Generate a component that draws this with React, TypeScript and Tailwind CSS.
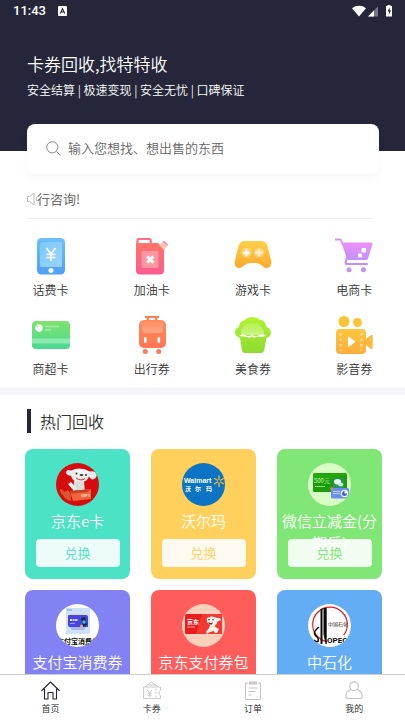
import React, { useState } from 'react';

interface IconProps {
  className?: string;
}

interface Category {
  label: string;
  Icon: React.FC<IconProps>;
}

interface HotCard {
  name: string;
  bg: string;
  text: string;
  Logo: React.FC<IconProps>;
}

/* ---------- status bar ---------- */

const StatusBar: React.FC = () => (
  <div className="flex h-[22px] items-center justify-between pl-[13px] pr-3 text-white">
    <div className="flex items-center gap-3">
      <span className="font-[family-name:Roboto,sans-serif] text-[13px] font-medium leading-[22px]">11:43</span>
      <svg viewBox="0 0 9 10" className="h-[10px] w-[9px]">
        <rect width="9" height="10" rx="1" fill="#fff" />
        <path d="M2.3 7.5 4.5 2.5 6.7 7.5M3.1 6h2.8" stroke="#25263a" strokeWidth="1.1" fill="none" />
      </svg>
    </div>
    <div className="flex items-center">
      <svg viewBox="0 0 41 12" className="h-3 w-[41px]">
        <path d="M0 3.2C4-.1 10-.1 14 3.2L7 11.500Z" fill="#fff" />
        <path d="M26 1.500v10H16Z" fill="#777887" />
        <path d="M22 5.500v6h-6Z" fill="#fff" />
        <path d="M34 1h1.500V0h3v1H40v10.500h-6V1Z" fill="#fff" />
        <path d="M37.700 2.500 35.500 6.500H37v3l2-4h-1.300Z" fill="#25263a" />
      </svg>
    </div>
  </div>
);

/* ---------- category icons ---------- */

const PhoneCardIcon: React.FC<IconProps> = ({ className }) => (
  <svg viewBox="0 0 38 38" className={className}>
    <defs>
      <linearGradient id="phone" x1="0" y1="0" x2="0" y2="1">
        <stop offset="0" stopColor="#6ec0fb" />
        <stop offset="1" stopColor="#4f9ff5" />
      </linearGradient>
      <linearGradient id="phoneScreen" x1="0" y1="0" x2="1" y2="1">
        <stop offset="0" stopColor="#7cc9fd" />
        <stop offset="1" stopColor="#9bd2fd" />
      </linearGradient>
    </defs>
    <rect x="5" y="1" width="28" height="36.500" rx="4.500" fill="url(#phone)" />
    <rect x="8" y="5" width="22" height="25" rx="1.500" fill="url(#phoneScreen)" />
    <path d="m14.500 11 4.500 6 4.500-6M19 17v7M14.500 17.500h9M14.500 20.500h9" stroke="#fff" strokeWidth="1.700" fill="none" />
    <circle cx="19" cy="33.500" r="2.500" fill="#fff" />
  </svg>
);

const FuelIcon: React.FC<IconProps> = ({ className }) => (
  <svg viewBox="0 0 38 38" className={className}>
    <defs>
      <linearGradient id="fuel" x1="0" y1="0" x2="0" y2="1">
        <stop offset="0" stopColor="#ff7468" />
        <stop offset="1" stopColor="#fd5b93" />
      </linearGradient>
    </defs>
    <path d="M4.500 7V2.500Q4.500 2 5.500 2h11q1 0 1.200 1V7" stroke="#fc6d8d" strokeWidth="2.200" fill="none" />
    <path d="M3 6h22l6 6v21.500q0 4-4 4H7q-4 0-4-4Z" fill="url(#fuel)" />
    <path d="m26 8 4-3 4 4-3 4Z" fill="#fdc5ae" />
    <path d="m29.500 4.500 1.500-1 4 4-1.200 1.500Z" fill="#fb8aa5" />
    <rect x="8.500" y="14" width="17" height="17" rx="1.500" fill="#ff96a1" />
    <path d="m14.200 19.500 6.200 6.200M20.400 19.500l-6.200 6.200" stroke="#fff" strokeWidth="3" />
  </svg>
);

const GameIcon: React.FC<IconProps> = ({ className }) => (
  <svg viewBox="0 0 38 38" className={className}>
    <defs>
      <linearGradient id="game" x1="0" y1="0" x2="0" y2="1">
        <stop offset="0" stopColor="#fed04a" />
        <stop offset="1" stopColor="#fea92c" />
      </linearGradient>
      <radialGradient id="glow">
        <stop offset="0" stopColor="#fff" stopOpacity=".8" />
        <stop offset="1" stopColor="#fff" stopOpacity="0" />
      </radialGradient>
    </defs>
    <path
      d="M11 4h16q5 0 6.500 5l3.500 14q1.500 7-4 8-2.500.500-5-2.500Q25 26 22 26h-6q-3 0-6 2.500Q7 31.500 4.500 31-.500 30 1 23L4.500 9Q6 4 11 4Z"
      fill="url(#game)"
    />
    <circle cx="12.500" cy="15.700" r="6" fill="url(#glow)" />
    <circle cx="25" cy="15.700" r="6" fill="url(#glow)" />
    <path d="M12.500 12.500v6.400M9.300 15.700h6.400" stroke="#fff" strokeWidth="1.700" />
    <g fill="#fff" opacity=".85">
      <circle cx="25" cy="12.800" r="1.100" />
      <circle cx="25" cy="18.600" r="1.100" />
      <circle cx="22.100" cy="15.700" r="1.100" />
      <circle cx="27.900" cy="15.700" r="1.100" />
    </g>
  </svg>
);

const CartIcon: React.FC<IconProps> = ({ className }) => (
  <svg viewBox="0 0 38 38" className={className}>
    <defs>
      <linearGradient id="cart" x1="0" y1="0" x2="0" y2="1">
        <stop offset="0" stopColor="#ee8ff8" />
        <stop offset="1" stopColor="#c193fb" />
      </linearGradient>
    </defs>
    <path d="M0 2.500h5q1 0 1.300 1L8 8" stroke="#e58cf6" strokeWidth="2" fill="none" />
    <path d="M6.500 5.500H36q2 0 1.400 2l-4.400 14q-.400 1.500-2 1.500H13L8.500 12Z" fill="url(#cart)" />
    <path d="m11 14 1.500 6q-3.500 7-.500 7H32" stroke="#c78cf9" strokeWidth="2.200" fill="none" strokeLinecap="round" />
    <rect x="26.500" y="11" width="4.500" height="4.500" rx="1" fill="#fff" />
    <rect x="23" y="16.500" width="4" height="4" rx="1" fill="#fff" />
    <circle cx="14" cy="32.700" r="2.500" fill="#c494f8" />
    <circle cx="28.500" cy="32.700" r="2.500" fill="#c494f8" />
  </svg>
);

const MarketIcon: React.FC<IconProps> = ({ className }) => (
  <svg viewBox="0 0 38 38" className={className}>
    <defs>
      <linearGradient id="market" x1="0" y1="0" x2="0" y2="1">
        <stop offset="0" stopColor="#80e26f" />
        <stop offset="1" stopColor="#47d992" />
      </linearGradient>
    </defs>
    <rect y="5" width="38" height="28" rx="4" fill="url(#market)" />
    <rect y="22.500" width="38" height="5" fill="#8ceab0" />
    <circle cx="7" cy="12" r="3.700" fill="#fff" />
    <circle cx="5.500" cy="10.500" r="1.200" fill="#b8f0b4" />
    <path d="M13 10.500h14M13 14h6" stroke="#a6edab" strokeWidth="1.600" />
  </svg>
);

const LuggageIcon: React.FC<IconProps> = ({ className }) => (
  <svg viewBox="0 0 38 38" className={className}>
    <defs>
      <linearGradient id="luggage" x1="0" y1="0" x2="0" y2="1">
        <stop offset="0" stopColor="#ff8c5c" />
        <stop offset="1" stopColor="#ff7553" />
      </linearGradient>
      <linearGradient id="luggagePanel" x1="0" y1="0" x2="0" y2="1">
        <stop offset="0" stopColor="#ff9266" />
        <stop offset="1" stopColor="#ffa585" />
      </linearGradient>
    </defs>
    <path d="M12 1h14M14 1l1.500 3.500M24 1l-1.500 3.500" stroke="#f98057" strokeWidth="2" />
    <rect x="6" y="4" width="27" height="28" rx="5" fill="url(#luggage)" />
    <rect x="9" y="6" width="21" height="11" rx="3.500" fill="url(#luggagePanel)" />
    <rect x="11" y="21" width="2.600" height="6" rx="1.300" fill="#fff" />
    <rect x="24.500" y="21" width="2.600" height="6" rx="1.300" fill="#fff" />
    <circle cx="12.300" cy="35.500" r="2.500" fill="#ff7a59" />
    <circle cx="25.700" cy="35.500" r="2.500" fill="#ff7a59" />
  </svg>
);

const FoodIcon: React.FC<IconProps> = ({ className }) => (
  <svg viewBox="0 0 38 38" className={className}>
    <defs>
      <linearGradient id="cake" x1="0" y1="0" x2="0" y2="1">
        <stop offset="0" stopColor="#b4f233" />
        <stop offset="1" stopColor="#8cdc2f" />
      </linearGradient>
      <linearGradient id="cakeTop" x1="0" y1="0" x2="0" y2="1">
        <stop offset="0" stopColor="#b8f24a" />
        <stop offset="1" stopColor="#c8f488" />
      </linearGradient>
    </defs>
    <path
      d="M6 22Q0 19.500 1 15.500 1.500 12 5 11q0-5 5.500-7Q15 0 21 1.500q3 0 4.500 2 5-.500 7 7.500 4.500 1.500 4.500 5.500-.500 4.500-4.500 5.500L30 35q-.700 2-3 2H11q-2.500 0-3-2Z"
      fill="url(#cake)"
    />
    <path d="M7 19q-1-11 10-12 12 0 13.500 12Z" fill="url(#cakeTop)" />
    <path d="M5 20q4-2.500 7-.500 3 1.500 6-1 3 2.500 6 1 4-2 8 .500l-5 1q-3-1-5 0-2 1-4-.500-3 1.500-5 .500-3-.500-8-1Z" fill="#fff" />
  </svg>
);

const MovieIcon: React.FC<IconProps> = ({ className }) => (
  <svg viewBox="0 0 38 38" className={className}>
    <defs>
      <linearGradient id="movie" x1="0" y1="0" x2="0" y2="1">
        <stop offset="0" stopColor="#fec63d" />
        <stop offset="1" stopColor="#ffae3c" />
      </linearGradient>
    </defs>
    <circle cx="9" cy="5.500" r="5.500" fill="#fec437" />
    <circle cx="22.500" cy="6.500" r="4.500" fill="#fec437" />
    <rect x="1" y="13" width="30" height="25" rx="4" fill="url(#movie)" />
    <path d="m31 23 5-4q1.700-.500 1.700 1v12q0 1.500-1.700 1l-5-4Z" fill="#ffb83e" />
    <path d="M5.500 17v18M26.500 17v18" stroke="#ffdf9e" strokeWidth="2" strokeDasharray="2.500 3" />
    <path d="M13.500 21v9.500l6.500-4.800Z" fill="#fff" stroke="#fff" strokeLinejoin="round" />
  </svg>
);

/* ---------- card logos ---------- */

const JoyLogo: React.FC<IconProps> = ({ className }) => (
  <svg viewBox="0 0 43 43" className={className}>
    <rect width="43" height="43" fill="#d70a0d" />
    <path d="M18 18h10l1 11H17Z" fill="#dcdcdc" />
    <path d="m12 21 3-2 5 6-2 3Z" fill="#f1f1f1" />
    <path d="M15 7.500Q24 3 34 8.500q5-1 7 3-1 5-5 5-2-1-3-3-2 6-10 5.500-7-.500-8-6.500-2 1-5-2 0-5 5-3Z" fill="#ebebeb" />
    <path d="M17 8q9-4 16 1l-8 2Z" fill="#fafafa" />
    <circle cx="20.500" cy="10.500" r=".9" fill="#222" />
    <circle cx="30" cy="12" r=".9" fill="#222" />
    <ellipse cx="25.500" cy="12" rx="1.800" ry="1.100" fill="#333" />
    <path d="M20 15q5 3.500 9 .500" stroke="#b33" strokeWidth="1" fill="none" />
    <path d="m14 28 21-2v10l-18 2Z" fill="#f2643a" />
    <path d="m14 28 21-2-3 3-16 1.500Z" fill="#c9402a" />
    <path d="M4 26q3 0 4 3l4-2 3 5v6q-6-1-8-6-3-1-3-6Z" fill="#d9562f" />
    <text x="25" y="34" fontSize="4" fontWeight="700" fill="#ffe0d0" fontFamily="Liberation Sans, sans-serif">GIFT</text>
  </svg>
);

const WalmartLogo: React.FC<IconProps> = ({ className }) => (
  <svg viewBox="0 0 43 43" className={className}>
    <rect width="43" height="43" fill="#0b74c4" />
    <text x="2" y="20" fontSize="7" fontWeight="700" fill="#fff" fontFamily="Liberation Sans, sans-serif">Walmart</text>
    <g fontSize="6" fontWeight="700" fill="#fff" fontFamily="Noto Sans CJK SC, sans-serif">
      <text x="3" y="28">沃</text>
      <text x="13" y="28">尔</text>
      <text x="24" y="28">玛</text>
    </g>
    <path
      d="M37 13v3.500M37 20v3.500M32.500 15.500l3 1.700M38.500 19l3 1.800M41.500 15.500l-3 1.700M35.500 19l-3 1.800"
      stroke="#fdbb30"
      strokeWidth="1.300"
      strokeLinecap="round"
    />
  </svg>
);

const WechatLogo: React.FC<IconProps> = ({ className }) => (
  <svg viewBox="0 0 43 43" className={className}>
    <rect width="43" height="43" fill="#d9fcc5" />
    <rect x="5" y="10" width="34" height="19" rx="1.500" fill="#22a80c" />
    <path d="M5 20 39 12v15q0 2-2 2H7q-2 0-2-2Z" fill="#189506" opacity=".6" />
    <text x="6" y="20" fontSize="6" fill="#d8ffc2" fontFamily="Noto Sans CJK SC, sans-serif">500元</text>
    <path d="M7 23.500h10" stroke="#c5f5ad" strokeWidth="1.200" strokeDasharray="1.500 .6" />
    <rect x="25" y="15" width="11" height="10" rx="1" fill="#2f8f60" />
    <ellipse cx="29.500" cy="18.800" rx="3.500" ry="2.800" fill="#eafff0" />
    <ellipse cx="32.700" cy="21.500" rx="2.600" ry="2.100" fill="#c9f3d6" />
    <rect x="23" y="25" width="18" height="10.500" rx="1.500" fill="#6b8ef2" />
    <path d="M25 28.500h7M25 30.500h7" stroke="#c3d2ff" strokeWidth="1.200" />
    <circle cx="36.500" cy="30.500" r="3.700" fill="#f3f7ff" />
    <path d="M36.500 28v2.500H39a2.500 2.500 0 1 1-2.500-2.500Z" fill="#3a62d8" />
    <circle cx="23.500" cy="25.500" r="1.300" fill="#ff7b5a" />
  </svg>
);

const AlipayLogo: React.FC<IconProps> = ({ className }) => (
  <svg viewBox="0 0 43 43" className={className}>
    <rect width="43" height="43" fill="#fff" />
    <rect x="10" y="4" width="24" height="26" fill="#cfe0fa" />
    <path d="M11 6h5" stroke="#5aa9b8" strokeWidth="1" />
    <path d="M12 12q0-1 1-1h17q2 0 2 2v10H14q-2 0-2-2Z" fill="#4746dc" />
    <path d="M14 23h16l-2 3H16Z" fill="#a8b8f3" />
    <path d="M14 16h8" stroke="#dfe0ff" strokeWidth="2.200" strokeDasharray="2 .6" />
    <path d="M14 19.500h5" stroke="#9d9cf5" strokeWidth="1" />
    <path d="m25 14 4-1 2 8-4 2Z" fill="#182a5a" />
    <circle cx="28" cy="18" r="1.700" fill="#43c2e0" />
    <circle cx="25.500" cy="22" r="1.500" fill="#f0b057" />
    <text x="1" y="40" fontSize="7" fontWeight="700" fill="#111" fontFamily="Noto Sans CJK SC, sans-serif">支付宝消费券</text>
  </svg>
);

const JdPayLogo: React.FC<IconProps> = ({ className }) => (
  <svg viewBox="0 0 43 43" className={className}>
    <rect width="43" height="43" fill="#fdd0bb" />
    <rect x="3" y="10" width="37" height="20" rx="1.500" fill="#e91d1f" />
    <path d="M20 10h20v20H14Z" fill="#f23a33" />
    <text x="5" y="20" fontSize="6" fontWeight="700" fill="#fff" fontFamily="Noto Sans CJK SC, sans-serif">京东</text>
    <path d="M5 23h8" stroke="#ff9a8e" strokeWidth="1" />
    <path d="M25 14q5-3 10 0 3-1 4 2l-4 2q0 3-3 4l5 3-2 4h-2l-1-2-4 1-3 2-1-2 3-4 1-3q-4-2-3-7Z" fill="#fff3ee" />
    <path d="M26 18q3 2 5 0l-1 2.500h-3Z" fill="#8c2a22" />
    <circle cx="27" cy="15.700" r=".8" fill="#333" />
    <circle cx="31" cy="15.700" r=".8" fill="#333" />
  </svg>
);

const SinopecLogo: React.FC<IconProps> = ({ className }) => (
  <svg viewBox="0 0 43 43" className={className}>
    <rect width="43" height="43" fill="#fff" />
    <circle cx="22" cy="20.500" r="17.300" fill="none" stroke="#ea1c24" strokeWidth="1.200" />
    <path d="M12.500 5.500 14.500 4v36h-2ZM15.500 4h3.200v36h-1.200L15.500 30Z" fill="#0a0a0a" />
    <path d="M11 23q-5 4-4.500 6.500.500 2 3 4 1.500 1.500.500 4-2 1-4-1.500" stroke="#0a0a0a" strokeWidth="1.600" fill="none" />
    <rect x="19" y="31" width="24" height="12" fill="#fff" />
    <text x="20" y="22" fontSize="5" fill="#111" fontFamily="Noto Sans CJK SC, sans-serif">中国石化</text>
    <text x="19" y="39" fontSize="8" fontWeight="700" fill="#0a0a0a" fontFamily="Roboto, sans-serif">OPEC</text>
  </svg>
);

/* ---------- tab icons ---------- */

const HomeIcon: React.FC<IconProps> = ({ className }) => (
  <svg viewBox="0 0 20 20" className={className} fill="none" stroke="#25263a" strokeWidth="1.100" strokeLinejoin="round" strokeLinecap="round">
    <path d="M.800 9.500 9.500 1l8.700 8.500M3.500 8v10H7v-6.500h5V18h3.500V8" />
  </svg>
);

const VoucherIcon: React.FC<IconProps> = ({ className }) => (
  <svg viewBox="0 0 20 20" className={className} fill="none" stroke="#c4c4c4" strokeWidth=".9">
    <path d="M1.500 6h17v3.500q-1.500.500-1.500 2.500t1.500 2.500v3h-17ZM3 6l5-4q1.500-1.200 3 0l5 4M6 4h8" />
    <path d="m5.500 9 2.200 3 2.200-3M7.700 12v4M5.700 12.300h4M5.700 14.200h4" />
    <path d="M14 7.500v9.500" strokeDasharray="2 1.500" />
  </svg>
);

const OrderIcon: React.FC<IconProps> = ({ className }) => (
  <svg viewBox="0 0 20 20" className={className} fill="none" stroke="#c4c4c4" strokeWidth="1">
    <path d="M5.500 2H2.500v16.500h15V2H14.500" />
    <rect x="6.500" y="1" width="7" height="2" fill="#d4d4d4" />
    <path d="M5.500 7h9M5.500 10.500h7M5.500 14h3" />
  </svg>
);

const UserIcon: React.FC<IconProps> = ({ className }) => (
  <svg viewBox="0 0 20 20" className={className} fill="none" stroke="#c4c4c4" strokeWidth="1.100">
    <circle cx="10" cy="5.200" r="4.300" />
    <path d="M7 8.500Q2 10 1.800 15.500q0 2 2 2h12.400q2 0 2-2Q18 10 13 8.500" />
  </svg>
);

const CATEGORIES: Category[] = [
  { label: '话费卡', Icon: PhoneCardIcon },
  { label: '加油卡', Icon: FuelIcon },
  { label: '游戏卡', Icon: GameIcon },
  { label: '电商卡', Icon: CartIcon },
  { label: '商超卡', Icon: MarketIcon },
  { label: '出行券', Icon: LuggageIcon },
  { label: '美食券', Icon: FoodIcon },
  { label: '影音券', Icon: MovieIcon },
];

const HOT_CARDS: HotCard[] = [
  { name: '京东e卡', bg: 'bg-[#4be2c5]', text: 'text-[#4be2c5]', Logo: JoyLogo },
  { name: '沃尔玛', bg: 'bg-[#ffd15c]', text: 'text-[#ffd15c]', Logo: WalmartLogo },
  { name: '微信立减金(分期乐)', bg: 'bg-[#80e675]', text: 'text-[#80e675]', Logo: WechatLogo },
  { name: '支付宝消费券', bg: 'bg-[#8282f4]', text: 'text-[#8282f4]', Logo: AlipayLogo },
  { name: '京东支付券包', bg: 'bg-[#ff5c5c]', text: 'text-[#ff5c5c]', Logo: JdPayLogo },
  { name: '中石化', bg: 'bg-[#62adf3]', text: 'text-[#62adf3]', Logo: SinopecLogo },
];

const TABS = [
  { label: '首页', Icon: HomeIcon },
  { label: '卡券', Icon: VoucherIcon },
  { label: '订单', Icon: OrderIcon },
  { label: '我的', Icon: UserIcon },
];

export default function App() {
  const [keyword, setKeyword] = useState('');
  const [activeTab, setActiveTab] = useState('首页');

  return (
    <div className="flex h-screen flex-col bg-white font-[family-name:'Noto_Sans_CJK_SC',sans-serif] font-[350] text-[#333]">
      <main className="min-h-0 flex-1 overflow-y-auto [scrollbar-width:none]">
        <header className="bg-[#25263a] pb-[52px] text-white">
          <StatusBar />
          <div className="px-[27px] pt-[29px]">
            <h1 className="text-[17px] font-[350] leading-[26px]">卡券回收,找特特收</h1>
            <p className="mt-1 text-[12px] leading-[18px]">安全结算 | 极速变现 | 安全无忧 | 口碑保证</p>
          </div>
        </header>

        {/* search */}
        <label className="relative -mt-[27px] ml-[27px] mr-[26px] flex h-[50px] items-center gap-[7px] rounded-lg bg-white px-[19px] pb-[2px] shadow-[0_5px_10px_rgba(0,0,0,0.03)]">
          <svg viewBox="0 0 15 15" className="h-[15px] w-[15px]" fill="none" stroke="#888" strokeWidth="1">
            <circle cx="6.300" cy="6.300" r="5.600" />
            <path d="m10.500 10.500 4 4" />
          </svg>
          <input
            type="text"
            aria-label="搜索"
            value={keyword}
            onChange={(e) => setKeyword(e.target.value)}
            placeholder="输入您想找、想出售的东西"
            className="min-w-0 flex-1 bg-transparent text-[13px] leading-5 outline-none placeholder:text-[#666]"
          />
        </label>

        {/* notice */}
        <div className="ml-[27px] mr-8 flex h-[45px] items-center border-b border-[#efefef] pt-[5px]">
          <svg viewBox="0 0 10 14" className="h-[14px] w-[10px]" fill="none" stroke="#bbb" strokeWidth="1">
            <path d="M.500 4.500h2l4.500-3.500v12L2.500 9.500h-2ZM9.500 5v4" />
          </svg>
          <p className="text-[13px] leading-5 text-[#555]">行咨询!</p>
        </div>

        {/* categories */}
        <nav className="grid grid-cols-4 gap-y-[15px] pb-[7px] pt-[18px]">
          {CATEGORIES.map(({ label, Icon }) => (
            <button key={label} type="button" className="flex flex-col items-center">
              <Icon className="h-[38px] w-[38px]" />
              <span className="mt-[3px] text-[12px] leading-[23px]">{label}</span>
            </button>
          ))}
        </nav>

        <div className="h-2 bg-[#f4f4fa]" />

        {/* hot list */}
        <section className="pb-4 pl-[25px] pr-[23px] pt-[14px]">
          <div className="ml-[2px] flex items-center gap-[9px]">
            <span className="h-6 w-1 bg-[#25263a]" />
            <h2 className="text-[16px] font-[350] leading-6">热门回收</h2>
          </div>
          <div className="mt-4 grid grid-cols-3 gap-x-[21px] gap-y-[11px]">
            {HOT_CARDS.map(({ name, bg, text, Logo }) => (
              <div key={name} className={`flex flex-col items-center rounded-lg pb-3 pt-[14px] ${bg}`}>
                <Logo className="h-[43px] w-[43px] rounded-full" />
                <h3 className="mt-1 h-[22px] w-full px-1 text-center text-[15px] font-[350] leading-[22px] text-white">{name}</h3>
                <button type="button" className={`z-10 mt-[7px] h-7 w-4/5 rounded bg-white/90 text-[13px] leading-7 ${text}`}>
                  兑换
                </button>
              </div>
            ))}
          </div>
        </section>
      </main>

      <nav className="grid h-[46px] shrink-0 grid-cols-4 border-t border-[#ccc] bg-white">
        {TABS.map(({ label, Icon }) => (
          <button
            key={label}
            type="button"
            aria-current={activeTab === label ? 'page' : undefined}
            onClick={() => setActiveTab(label)}
            className="flex flex-col items-center pt-[6px]"
          >
            <Icon className="h-5 w-5" />
            <span className="mt-[2px] text-[9px] leading-3 text-[#222]">{label}</span>
          </button>
        ))}
      </nav>
    </div>
  );
}
